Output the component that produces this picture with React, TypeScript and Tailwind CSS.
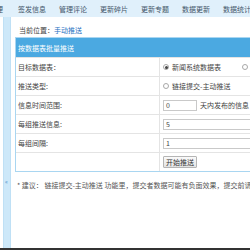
import React from 'react';

const navItems = ['签发信息', '管理评论', '更新碎片', '更新专题', '数据更新', '数据统计'];

function Radio({ checked }: { checked?: boolean }) {
  return (
    <span className="w-[6px] h-[6px] rounded-full border border-[#a8a8a8] bg-white flex items-center justify-center shrink-0">
      {checked && <span className="w-[3px] h-[3px] rounded-full bg-[#444]" />}
    </span>
  );
}

function Row({ label, children }: { label: string; children: React.ReactNode }) {
  return (
    <div className="flex h-[19px] border-t border-[#e4e4e4]">
      <div className="w-[144px] shrink-0 flex items-center pl-[2px] border-r border-[#e4e4e4] text-[#444]">
        {label}
      </div>
      <div className="flex-1 flex items-center pl-[3px] gap-[3px] whitespace-nowrap">{children}</div>
    </div>
  );
}

export default function App() {
  return (
    <div
      className="w-[250px] h-[250px] overflow-hidden bg-white flex flex-col text-[7px] leading-[10px] text-[#444]"
      style={{ fontFamily: '"Noto Sans CJK SC", "Noto Sans", sans-serif' }}
    >
      {/* top nav */}
      <div className="h-[17px] shrink-0 bg-[#e0f0fb] flex items-center gap-[13px] whitespace-nowrap text-[#44566a]">
        <span className="ml-[-11px] mr-[2px]">管理</span>
        {navItems.map((item) => (
          <span key={item} className="shrink-0">{item}</span>
        ))}
      </div>

      <div className="flex-1 flex min-h-0">
        {/* left strip */}
        <div className="ml-[3px] w-[8px] shrink-0 bg-[#cde8f9] border-x border-[#bfe0f5] flex flex-col">
          <span className="mt-[161px] ml-[1px] text-[6px] leading-[8px] text-[#4a90c8]">«</span>
        </div>

        {/* content */}
        <div className="flex-1 min-w-0 pl-[4px] pt-[8px]">
          <div className="pl-[4px]">
            当前位置：<span className="text-[#1e6fbf]">手动推送</span>
          </div>

          <div className="mt-[2px] w-[320px] border border-[#a9d6f1]">
            <div className="h-[19px] bg-[#4ba9e1] text-white flex items-center pl-[2px]">按数据表批量推送</div>
            <Row label="目标数据表：">
              <Radio checked />
              <span className="mr-[18px]">新闻系统数据表</span>
              <Radio />
              <span>商城系统数据表</span>
            </Row>
            <Row label="推送类型:">
              <Radio />
              <span className="mr-[22px]">链接提交-主动推送</span>
              <Radio />
              <span>链接提交</span>
            </Row>
            <Row label="信息时间范围:">
              <span className="w-[34px] h-[11px] border border-[#c9c9c9] pl-[2px] flex items-center">0</span>
              <span>天内发布的信息</span>
            </Row>
            <Row label="每组推送信息:">
              <span className="w-[120px] h-[11px] border border-[#c9c9c9] pl-[2px] flex items-center">5</span>
            </Row>
            <Row label="每组间隔:">
              <span className="w-[120px] h-[11px] border border-[#c9c9c9] pl-[2px] flex items-center">1</span>
            </Row>
            <div className="flex h-[19px] border-t border-[#e4e4e4]">
              <div className="w-[144px] shrink-0 border-r border-[#e4e4e4]" />
              <div className="flex-1 flex items-center pl-[3px]">
                <span className="h-[12px] px-[2px] border border-[#b5b5b5] rounded-[1px] bg-gradient-to-b from-[#fafafa] to-[#e4e4e4] flex items-center text-[#333]">
                  开始推送
                </span>
              </div>
            </div>
          </div>

          <div className="mt-[8px] pl-[2px] whitespace-nowrap text-[#555]">
            * 建议： 链接提交-主动推送 功能里，提交者数据可能有负面效果，提交前请确认
          </div>
        </div>
      </div>

      <div className="h-[2px] shrink-0 bg-[#333]" />
    </div>
  );
}
